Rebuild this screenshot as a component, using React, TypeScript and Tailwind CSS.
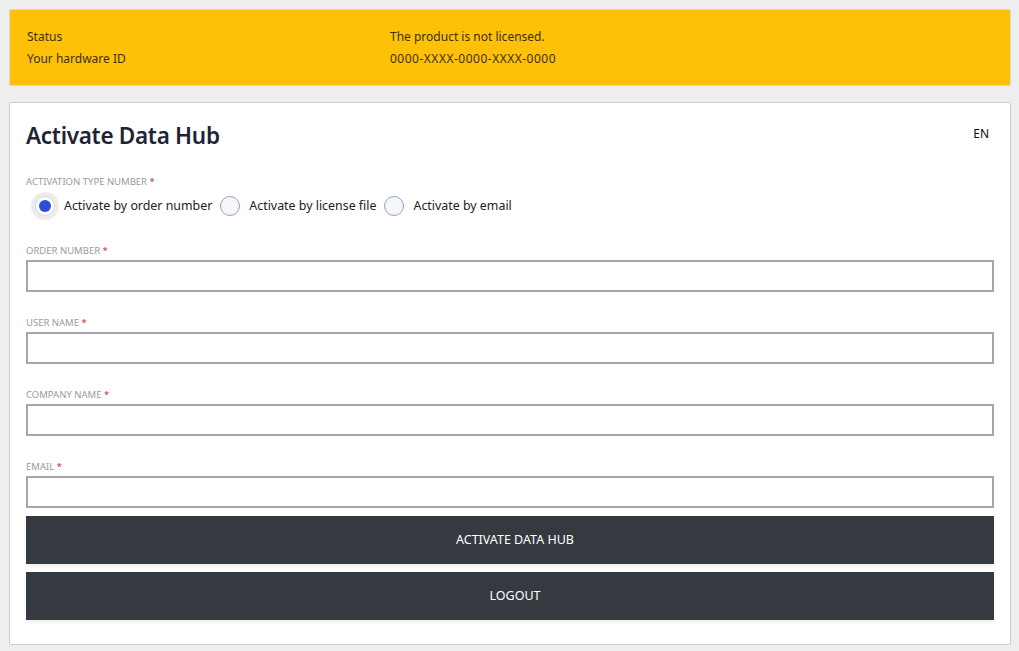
import { useState } from 'react';

const FIELDS = ['ORDER NUMBER', 'USER NAME', 'COMPANY NAME', 'EMAIL'];

const OPTIONS = [
  { id: 'order', label: 'Activate by order number' },
  { id: 'file', label: 'Activate by license file' },
  { id: 'email', label: 'Activate by email' },
];

function Label({ text }: { text: string }) {
  return (
    <div className="text-[9.5px] leading-[14px] text-[#9a9a9a] uppercase">
      {text} <span className="text-[#e0241b]">*</span>
    </div>
  );
}

function Radio({ checked, label, onClick }: { checked: boolean; label: string; onClick: () => void }) {
  return (
    <button type="button" onClick={onClick} className="flex items-center gap-[5px] h-[30px]">
      <span className="w-[28px] h-[28px] flex items-center justify-center rounded-full" style={{ background: checked ? '#ececf0' : 'transparent' }}>
        {checked ? (
          <span className="w-[20px] h-[20px] rounded-full bg-white border border-[#d6d9e0] flex items-center justify-center">
            <span className="w-[12px] h-[12px] rounded-full bg-[#2d4fd8]" />
          </span>
        ) : (
          <span className="w-[20px] h-[20px] rounded-full bg-[#f4f6f9] border border-[#98a2b3]" />
        )}
      </span>
      <span className="text-[12.4px] text-[#222]">{label}</span>
    </button>
  );
}

export default function App() {
  const [type, setType] = useState('order');

  return (
    <div className="min-h-screen bg-[#eeeeee] pt-[9px] pb-[6px] pl-[9px] pr-[8px] font-['Noto_Sans',sans-serif] text-[#222]">
      <div className="bg-[#ffc107] border border-[#d9d9d9] rounded-[2px] px-[17px] pt-[16px] pb-[15px] text-[12px] leading-[22px] text-[#3a3000]">
        <div className="grid grid-cols-[363px_1fr]">
          <div>Status</div>
          <div>The product is not licensed.</div>
          <div>Your hardware ID</div>
          <div className="tracking-[0.5px]">0000-XXXX-0000-XXXX-0000</div>
        </div>
      </div>

      <div className="mt-[16px] bg-white border border-[#cccccc] rounded-[2px] px-[16px] pt-[16px] pb-[24px]">
        <div className="flex items-start justify-between">
          <h1 className="text-[22.5px] leading-[34px] font-semibold text-[#1e2433] tracking-[-0.3px]">Activate Data Hub</h1>
          <span className="text-[12px] text-[#111] mt-[6px] mr-[5px]">EN</span>
        </div>

        <div className="mt-[22px]">
          <Label text="Activation type number" />
          <div className="flex items-center gap-[4px] ml-[5px] mt-[2px]">
            {OPTIONS.map(o => (
              <Radio key={o.id} checked={type === o.id} label={o.label} onClick={() => setType(o.id)} />
            ))}
          </div>
        </div>

        {FIELDS.map((f, i) => (
          <div key={f} className={i === 0 ? 'mt-[23px]' : 'mt-[24px]'}>
            <Label text={f} />
            <input className="mt-[2px] w-full h-[32px] border-2 border-[#a6a6a6] bg-white outline-none px-2 text-[13px]" />
          </div>
        ))}

        <button className="mt-[8px] w-full h-[48px] pl-[10px] bg-[#353a41] text-white text-[12.5px] shadow-[0_3px_4px_rgba(0,0,0,0.06)]">
          ACTIVATE DATA HUB
        </button>
        <button className="mt-[8px] w-full h-[48px] pl-[10px] bg-[#353a41] text-white text-[12.5px] shadow-[0_3px_4px_rgba(0,0,0,0.06)]">
          LOGOUT
        </button>
      </div>
    </div>
  );
}
